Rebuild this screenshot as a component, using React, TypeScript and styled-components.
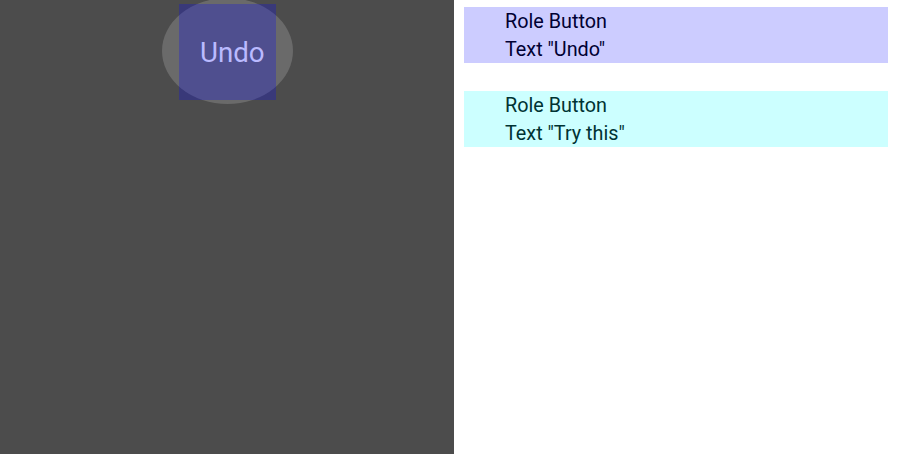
import React from "react";
import styled, { createGlobalStyle } from "styled-components";

const Global = createGlobalStyle`
  html, body { margin: 0; padding: 0; background: #ffffff; }
  body { font-family: Roboto, "Noto Sans", sans-serif; }
`;

const Page = styled.div`
  display: flex;
  width: 908px;
  height: 454px;
  overflow: hidden;
`;

const Screen = styled.div`
  position: relative;
  width: 454px;
  height: 454px;
  background: #4c4c4c;
  flex: none;
`;

const Ripple = styled.div`
  position: absolute;
  left: 162px;
  top: -2px;
  width: 131px;
  height: 106px;
  border-radius: 50%;
  background: rgba(255, 255, 255, 0.17);
`;

const Highlight = styled.div`
  position: absolute;
  left: 179px;
  top: 4px;
  width: 97px;
  height: 96px;
  background: rgba(0, 0, 255, 0.25);
`;

const UndoLabel = styled.span`
  position: absolute;
  left: 200px;
  top: 36px;
  font-size: 27.7px;
  line-height: 34px;
  color: #babaff;
`;

const Panel = styled.div`
  flex: 1;
  display: flex;
  flex-direction: column;
  gap: 28px;
  padding: 7px 20px 0 10px;
`;

const Node = styled.div<{ $bg: string; $fg: string }>`
  box-sizing: border-box;
  background: ${(p) => p.$bg};
  color: ${(p) => p.$fg};
  height: 56px;
  padding: 1px 0 0 41px;
  font-size: 19.8px;
  line-height: 28px;
`;

export default function App() {
  return (
    <>
      <Global />
      <Page>
        <Screen>
          <Ripple />
          <Highlight />
          <UndoLabel>Undo</UndoLabel>
        </Screen>
        <Panel>
          <Node $bg="#ccccff" $fg="#000033">
            <div>Role Button</div>
            <div>Text "Undo"</div>
          </Node>
          <Node $bg="#ccffff" $fg="#003333">
            <div>Role Button</div>
            <div>Text "Try this"</div>
          </Node>
        </Panel>
      </Page>
    </>
  );
}
